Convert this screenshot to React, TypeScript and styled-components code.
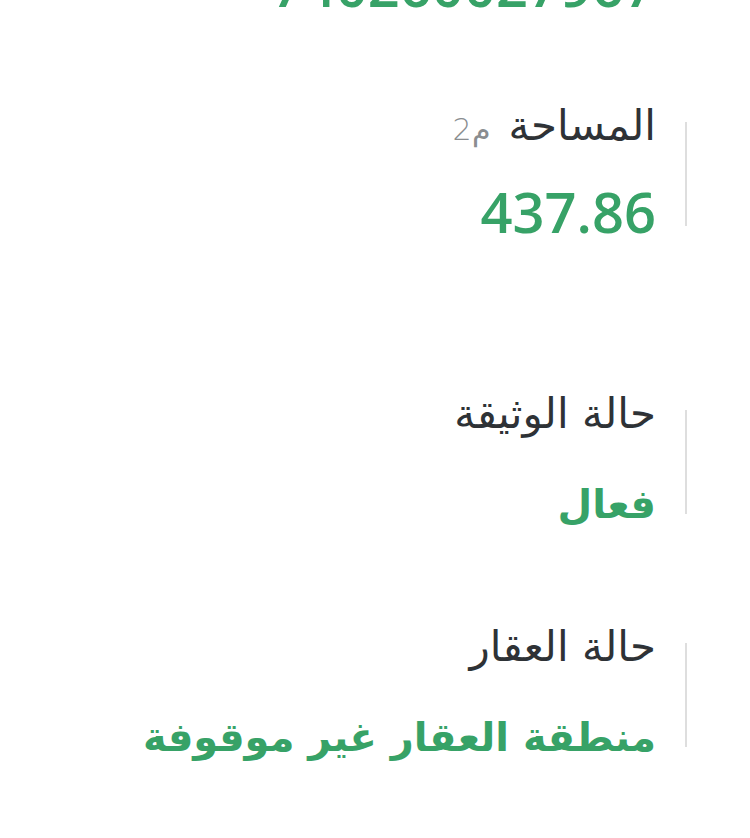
import * as React from 'react'
import styled, { createGlobalStyle } from 'styled-components'

const GlobalStyle = createGlobalStyle`
  html, body {
    margin: 0;
    padding: 0;
    background: #ffffff;
  }
  body {
    overflow: hidden;
    font-family: "Open Sans", "DejaVu Sans", sans-serif;
  }
`

interface Field {
  label: string
  unit?: string
  value: string
  numeric?: boolean
  gap: number
}

const fields: Field[] = [
  { label: 'رقم الوثيقة', value: '740260027967', numeric: true, gap: 81 },
  { label: 'المساحة', unit: 'م2', value: '437.86', numeric: true, gap: 143 },
  { label: 'حالة الوثيقة', value: 'فعال', gap: 88 },
  { label: 'حالة العقار', value: 'منطقة العقار غير موقوفة', gap: 0 },
]

export default function App() {
  return (
    <>
      <GlobalStyle />
      <Page dir="rtl">
        {fields.map((f, i) => (
          <Item key={i} $gap={f.gap}>
            <Bar />
            <Content>
              <Label>
                {f.label}
                {f.unit && <Unit>{f.unit}</Unit>}
              </Label>
              <Value $numeric={!!f.numeric}>{f.value}</Value>
            </Content>
          </Item>
        ))}
      </Page>
    </>
  )
}

const Page = styled.div`
  display: flex;
  flex-direction: column;
  padding-right: 63px;
  height: 838px;
  overflow: hidden;

  & > :first-child {
    margin-top: -128px;
  }
`

const Item = styled.div<{ $gap: number }>`
  display: flex;
  flex-direction: row;
  align-items: flex-start;
  flex-shrink: 0;
  margin-bottom: ${(p) => p.$gap}px;
`

const Bar = styled.div`
  width: 2px;
  align-self: stretch;
  margin: 24px 0 17px;
  background: #dedede;
`

const Content = styled.div`
  display: flex;
  flex-direction: column;
  align-items: flex-start;
  padding-right: 29px;
`

const Label = styled.div`
  display: flex;
  align-items: baseline;
  gap: 18px;
  height: 56px;
  font-family: "DejaVu Sans", sans-serif;
  font-size: 42px;
  line-height: 56px;
  color: #2e3236;
  white-space: nowrap;
`

const Unit = styled.span`
  font-family: "DejaVu Sans", sans-serif;
  font-size: 30px;
  font-weight: 300;
  color: #8a8d90;
`

const Value = styled.div<{ $numeric: boolean }>`
  margin-top: 25px;
  height: 64px;
  padding-top: ${(p) => (p.$numeric ? 0 : 5)}px;
  box-sizing: border-box;
  font-family: ${(p) => (p.$numeric ? '"Open Sans", "DejaVu Sans", sans-serif' : '"DejaVu Sans", sans-serif')};
  font-weight: ${(p) => (p.$numeric ? 600 : 700)};
  font-size: ${(p) => (p.$numeric ? 56 : 40)}px;
  line-height: 64px;
  color: #37a267;
  white-space: nowrap;
`
